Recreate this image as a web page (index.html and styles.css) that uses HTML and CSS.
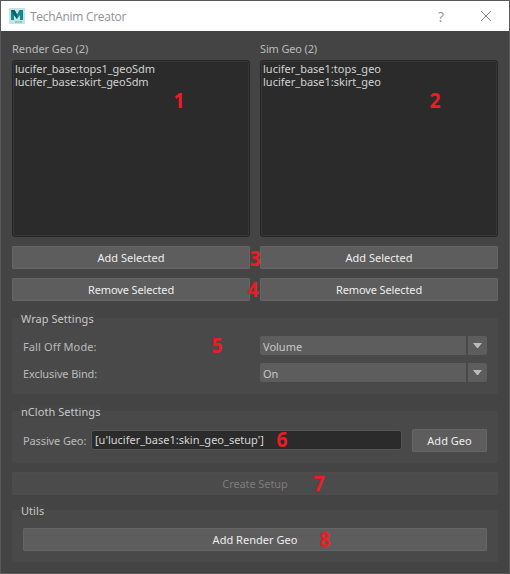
FILE: index.html
```
<!DOCTYPE html>
<html lang="en">
<head>
<meta charset="utf-8">
<title>TechAnim Creator</title>
<link rel="stylesheet" href="styles.css">
</head>
<body>
<div class="window">
  <header class="titlebar">
    <svg class="logo" width="16" height="16" viewBox="0 0 16 16">
      <rect width="16" height="16" fill="#c3e5e6"/>
      <path d="M2 12V2h3.500L8 6.500 10.500 2H14v10h-3V7L8 11 5 7v5z" fill="#16878a"/>
      <path d="M2 2h3.500L8 6.500V11L5 7z" fill="#0b5f66"/>
      <path d="M6 14h2m.5 0h1.500m.5 0h2.500" stroke="#4aa5a8"/>
    </svg>
    <span class="title">TechAnim Creator</span>
    <span class="help">?</span>
    <svg class="close" width="12" height="12" viewBox="0 0 12 12"><path d="M1 1l10 10M11 1L1 11" stroke="#858585" fill="none"/></svg>
  </header>
  <main class="content">
    <div class="columns">
      <section class="column">
        <div class="label heading">Render Geo (2)</div>
        <div class="list"><div>lucifer_base:tops1_geoSdm</div><div>lucifer_base:skirt_geoSdm</div></div>
        <button class="btn">Add Selected</button>
        <button class="btn remove">Remove Selected</button>
      </section>
      <section class="column">
        <div class="label heading sim">Sim Geo (2)</div>
        <div class="list second"><div>lucifer_base1:tops_geo</div><div>lucifer_base1:skirt_geo</div></div>
        <button class="btn">Add Selected</button>
        <button class="btn remove">Remove Selected</button>
      </section>
    </div>
    <section class="group wrap">
      <h2 class="legend">Wrap Settings</h2>
      <div class="row"><span class="label falloff">Fall Off Mode:</span><div class="select"><span class="value">Volume</span><span class="arrow"><i></i></span></div></div>
      <div class="row"><span class="label bind">Exclusive Bind:</span><div class="select"><span class="value">On</span><span class="arrow"><i></i></span></div></div>
    </section>
    <section class="group cloth">
      <h2 class="legend">nCloth Settings</h2>
      <div class="passive"><span class="label">Passive Geo:</span><div class="field">[u'lucifer_base1:skin_geo_setup']</div><button class="btn geo">Add Geo</button></div>
    </section>
    <button class="btn create" disabled>Create Setup</button>
    <section class="group utils">
      <h2 class="legend">Utils</h2>
      <button class="btn">Add Render Geo</button>
    </section>
  </main>
  <b class="mark m1">1</b><b class="mark m2">2</b><b class="mark m3">3</b><b class="mark m4">4</b>
  <b class="mark m5">5</b><b class="mark m6">6</b><b class="mark m7">7</b><b class="mark m8">8</b>
</div>
</body>
</html>
```
FILE: styles.css
```
* { box-sizing: border-box; }
body { margin: 0; font-family: "Noto Sans", sans-serif; font-size: 11px; line-height: 13px; color: #c8c8c8; }
.window { position: relative; width: 510px; height: 574px; background: #444; border: 1px solid #5a5a5a; overflow: hidden; }
.titlebar { display: flex; align-items: center; height: 30px; background: #fff; padding: 0 17px 0 8px; color: #929292; }
.title { font-family: "Open Sans", sans-serif; font-size: 12px; letter-spacing: -.3px; margin-left: 5px; flex: 1; }
.help { font-family: "Open Sans", sans-serif; font-size: 14px; margin-right: 36px; }
.content { padding: 11px 11px 0; }
.columns { display: grid; grid-template-columns: 238px 238px; gap: 10px; }
.column { display: flex; flex-direction: column; }
.label { color: #bbb; white-space: nowrap; }
.heading { height: 18px; letter-spacing: -.05px; }
.sim { letter-spacing: -.15px; }
.list { height: 177px; background: #2b2b2b; border: 1px solid #252525; border-radius: 3px; box-shadow: inset 0 0 0 1px #373737; padding: 1px 2px; margin-bottom: 9px; color: #d2d2d2; letter-spacing: -.04px; white-space: nowrap; }
.second { letter-spacing: 0; }
.btn { display: flex; align-items: center; justify-content: center; width: 100%; height: 23px; padding: 0 0 1px; border: 1px solid #656565; border-radius: 1px; background: #5d5d5d; color: #eee; font: inherit; letter-spacing: .02px; white-space: nowrap; }
.remove { letter-spacing: -.12px; }
.column .btn + .btn { margin-top: 9px; }
.group { background: #494949; border-radius: 2px; padding: 0 11px; }
.legend { width: max-content; margin: 0 0 0 -3px; padding: 0 1px; position: relative; top: -6px; font: inherit; background: #464646; color: #c8c8c8; letter-spacing: .05px; }
.wrap { height: 76px; margin-top: 17px; }
.row { display: flex; align-items: center; height: 19px; margin-top: 5px; }
.row + .row { margin-top: 8px; }
.row .label { width: 237px; padding-top: 1px; }
.falloff { letter-spacing: .12px; }
.bind { letter-spacing: -.12px; }
.select { width: 227px; height: 19px; display: flex; gap: 2px; }
.value { flex: 1; background: #5d5d5d; padding: 4px 3px 0; border-radius: 2px 0 0 2px; }
.arrow { width: 19px; background: #5d5d5d; border-radius: 0 2px 2px 0; padding: 7px 5px; }
.arrow i { display: block; border: solid transparent; border-width: 5px 4.5px 0; border-top-color: #bbb; }
.cloth { height: 52px; margin-top: 17px; }
.passive { display: flex; align-items: center; margin-top: 5px; }
.passive .label { width: 68px; letter-spacing: -.12px; }
.field { width: 311px; height: 20px; background: #2b2b2b; border: 1px solid #555; border-radius: 3px; padding: 2px 3px; color: #d6d6d6; white-space: nowrap; margin-top: -1px; }
.geo { width: 75px; margin-left: 10px; letter-spacing: 0; }
.create { margin-top: 9px; background: #4b4b4b; border-color: #4d4d4d; color: #7d7d7d; letter-spacing: -.1px; }
.utils { height: 52px; margin-top: 15px; }
.utils .btn { margin-top: 5px; }
.mark { position: absolute; color: #ed1c24; font: bold 21px/20px "Noto Sans", sans-serif; transform: scaleX(.92); }
.m1 { left: 172px; top: 89px; }
.m2 { left: 428px; top: 89px; }
.m3 { left: 248px; top: 247px; }
.m4 { left: 246px; top: 278px; }
.m5 { left: 210px; top: 334px; }
.m6 { left: 275px; top: 428px; }
.m7 { left: 312px; top: 472px; }
.m8 { left: 318px; top: 528px; }
```
